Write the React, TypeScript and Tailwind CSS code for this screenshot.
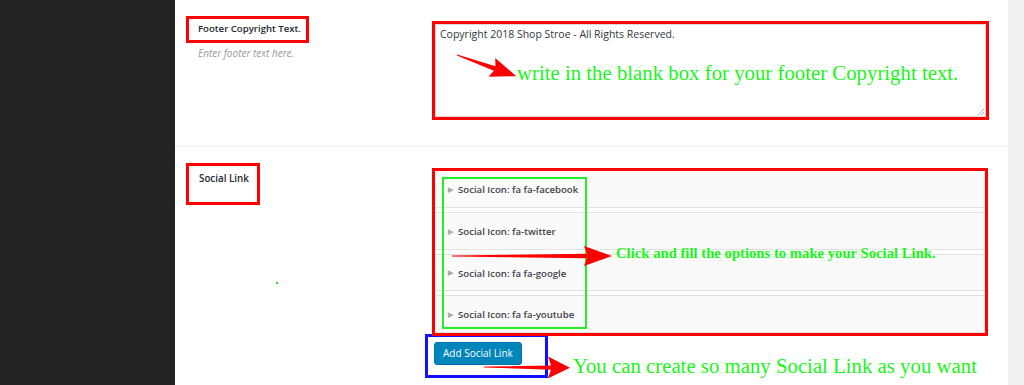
import React from 'react'

const green = '#19f519'

function Arrow({ x, y, len, angle, head = 24, half = 10, tail = 2.2 }: {
  x: number; y: number; len: number; angle: number; head?: number; half?: number; tail?: number
}) {
  const pts = [
    [0, -0.4], [len - head + 3, -tail], [len - head, -half], [len, 0],
    [len - head, half], [len - head + 3, tail], [0, 0.4],
  ].map(p => p.join(',')).join(' ')
  return <polygon points={pts} fill="#ff0000" transform={`translate(${x},${y}) rotate(${angle})`} />
}

const socials = ['Social Icon: fa fa-facebook', 'Social Icon: fa-twitter', 'Social Icon: fa fa-google', 'Social Icon: fa fa-youtube']

export default function App() {
  return (
    <div className="relative flex w-[1024px] h-[385px] overflow-hidden bg-white" style={{ fontFamily: '"Open Sans", "Noto Sans", sans-serif' }}>
      <div className="w-[175px] shrink-0 bg-[#232323]" />

      <div className="flex-1 flex flex-col">
        {/* footer copyright row */}
        <div className="flex h-[147px] pl-[11px] border-b border-dotted border-[#e6e6e6]">
          <div className="w-[246px] shrink-0 pt-[16px]">
            <div className="w-[123px] h-[27px] border-[3px] border-[#ff0000] pl-[9px] flex items-center text-[9.6px] font-semibold text-[#23282d]">
              Footer Copyright Text.
            </div>
            <div className="pl-[12px] mt-[3px] text-[10px] italic text-[#999]">Enter footer text here.</div>
          </div>
          <div className="pt-[21px]">
            <div className="w-[557px] h-[99px] border-[3px] border-[#ff0000]">
              <div className="relative h-full border border-[#dcdcdc] bg-white px-[4px] pt-[2px] text-[10.5px] text-[#32373c]">
                Copyright 2018 Shop Stroe - All Rights Reserved.
                <svg className="absolute right-[1px] bottom-[1px]" width="7" height="7" viewBox="0 0 7 7">
                  <path d="M7 1 L1 7 M7 4 L4 7" stroke="#999" strokeWidth="0.8" />
                </svg>
              </div>
            </div>
          </div>
        </div>

        {/* social link row */}
        <div className="flex flex-1 pl-[11px]">
          <div className="w-[246px] shrink-0 pt-[16px]">
            <div className="w-[74px] h-[42px] border-[3px] border-[#ff0000] pl-[10px] pt-[6px] text-[9.8px] font-semibold text-[#23282d]">
              Social Link
            </div>
          </div>
          <div className="pt-[21px] flex flex-col">
            <div className="relative z-10 w-[556px] h-[168px] border-[3px] border-[#ff0000] flex flex-col gap-[4px] bg-white">
              {socials.map((s, i) => (
                <div key={s} className={`h-[38px] ${i === 0 ? 'border-b' : 'border-y'} border-[#e2e2e2] bg-[#fafafa] flex items-center pt-[2px] pl-[13px] gap-[5px] text-[9.6px] font-semibold text-[#3c434a]`}>
                  <span className="text-[7px] text-[#aaa]">&#9654;</span>
                  <span>{s}</span>
                </div>
              ))}
            </div>
            <div className="-mt-[2px] -ml-[7px] w-[123px] h-[44px] border-[3px] border-[#1010ff] pl-[6px] pt-[2px]">
              <button className="h-[23px] px-[8px] rounded-[3px] bg-[#0085ba] border border-[#0073aa] text-white text-[10px]">
                Add Social Link
              </button>
            </div>
          </div>
        </div>
      </div>

      <div className="w-[16px] shrink-0 bg-[#f1f1f1]" />

      {/* annotations */}
      <div className="absolute z-20 left-[442px] top-[177px] w-[145px] h-[152px] border-2 border-[#22f022]" />
      <div className="absolute left-[276px] top-[282px] w-[2px] h-[2px] bg-[#22e022]" />
      <svg className="absolute z-30 inset-0 pointer-events-none" width="1024" height="385">
        <Arrow x={457} y={55} len={63} angle={19.6} head={26} half={10} tail={2.4} />
        <Arrow x={452} y={256} len={160} angle={0} head={28} half={10} tail={2.2} />
        <Arrow x={484} y={367} len={86} angle={0.5} head={22} half={11} tail={2.2} />
      </svg>
      <div className="absolute z-30 left-[517px] top-[60px] text-[20.8px] leading-[26px] whitespace-nowrap" style={{ fontFamily: '"Liberation Serif", serif', color: green }}>
        write in the blank box for your footer Copyright text.
      </div>
      <div className="absolute z-30 left-[616px] top-[244px] text-[14.7px] leading-[18px] font-bold whitespace-nowrap" style={{ fontFamily: '"Liberation Serif", serif', color: green }}>
        Click and fill the options to make your Social Link.
      </div>
      <div className="absolute z-30 left-[573px] top-[353px] text-[20.8px] leading-[26px] whitespace-nowrap" style={{ fontFamily: '"Liberation Serif", serif', color: green }}>
        You can create so many Social Link as you want
      </div>
    </div>
  )
}
